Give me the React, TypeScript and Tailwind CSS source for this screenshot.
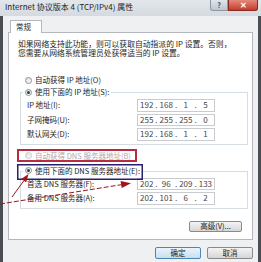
import { Fragment } from 'react';

const font = "font-['Noto_Sans_CJK_SC','Noto_Sans',sans-serif]";

function Radio({ checked = false, disabled = false }: { checked?: boolean; disabled?: boolean }) {
  return (
    <span
      className={
        'flex h-[7px] w-[7px] shrink-0 items-center justify-center rounded-full border bg-gradient-to-br from-[#dcdcdc] to-white ' +
        (disabled ? 'border-[#c9c9c9]' : 'border-[#8c9096]')
      }
    >
      {checked && <span className="h-[3px] w-[3px] rounded-full bg-[#24404f]" />}
    </span>
  );
}

function RadioRow({ label, checked, disabled }: { label: string; checked?: boolean; disabled?: boolean }) {
  return (
    <div className={'flex h-[10px] items-center gap-[3px] text-[7.5px] ' + (disabled ? 'text-[#ababab]' : 'text-[#1c1c1c]')}>
      <Radio checked={checked} disabled={disabled} />
      <span>{label}</span>
    </div>
  );
}

function IpBox({ parts }: { parts: string[] }) {
  return (
    <div className="flex h-[12.5px] w-[78px] items-center border border-[#c8cbd0] bg-white text-[#444]">
      {parts.map((p, i) => (
        <Fragment key={i}>
          <span className="flex-1 text-center">{p}</span>
          {i < 3 && <span>.</span>}
        </Fragment>
      ))}
    </div>
  );
}

function FieldRow({ label, parts }: { label: string; parts: string[] }) {
  return (
    <div className="flex h-[12.5px] items-center">
      <span className="w-[110px] shrink-0 text-[7.5px]">{label}</span>
      <IpBox parts={parts} />
    </div>
  );
}

function GroupBox({ title, rows }: { title: string; rows: { label: string; parts: string[] }[] }) {
  return (
    <div className="ml-[11px] mr-[4px] border border-[#d5dde3] pb-[3px] pl-[6px]">
      <div className="-mt-[6px] -ml-[4px] flex">
        <div className="bg-white px-[2px]">
          <RadioRow label={title} checked />
        </div>
      </div>
      <div className="mt-[2px] flex flex-col gap-[2px]">
        {rows.map((r) => (
          <FieldRow key={r.label} label={r.label} parts={r.parts} />
        ))}
      </div>
    </div>
  );
}

function Button({ label, primary = false, className = '' }: { label: string; primary?: boolean; className?: string }) {
  return (
    <div
      className={
        'flex items-center justify-center rounded-[2px] border bg-gradient-to-b text-[7.5px] ' +
        (primary
          ? 'border-[#4b86b4] from-[#eaf4fb] to-[#c9dfee] '
          : 'border-[#8a8a8a] from-[#f4f4f4] to-[#d6d6d6] ') +
        className
      }
    >
      {label}
    </div>
  );
}

export default function App() {
  return (
    <div className={'relative h-[262px] w-[261px] overflow-hidden bg-[#e9ebee] text-[8px] leading-[8px] text-[#1c1c1c] ' + font}>
      {/* Title bar */}
      <div className="flex h-[16px] items-start bg-gradient-to-b from-[#e3e7eb] to-[#d4dae0]">
        <span className="ml-[5px] mt-[3px] text-[#222]">Internet 协议版本 4 (TCP/IPv4) 属性</span>
        <div className="ml-auto flex">
          <div className="flex h-[11px] w-[18px] items-center justify-center rounded-bl-[3px] border border-t-0 border-[#8d98a5] bg-gradient-to-b from-[#dfe5ec] to-[#bcc6d1] text-[7px] font-bold text-[#3a4451]">
            ?
          </div>
          <div className="mr-[3px] flex h-[11px] w-[30px] items-center justify-center rounded-br-[3px] border border-t-0 border-[#8a2a20] bg-gradient-to-b from-[#e2887a] to-[#c5372a] text-[8px] font-bold text-white">
            ✕
          </div>
        </div>
      </div>

      <div className="flex h-[246px]">
        <div className="w-[3px] bg-[#4a4d52]" />
        <div className="flex w-[255px] flex-col bg-[#eef0f2] pt-[4px]">
          {/* Tab */}
          <div className="ml-[7px] flex">
            <div className="relative z-10 -mb-px flex h-[13px] w-[32px] items-center border border-b-0 border-[#b4b8be] bg-white pl-[5px] text-[7.5px]">
              常规
            </div>
          </div>

          {/* Tab panel */}
          <div className="mx-[5px] flex h-[208px] flex-col border border-[#b4b8be] bg-white">
            <div className="mt-[6px] pl-[9px] text-[7.8px] leading-[9px]">
              <div>如果网络支持此功能，则可以获取自动指派的 IP 设置。否则，</div>
              <div>您需要从网络系统管理员处获得适当的 IP 设置。</div>
            </div>

            <div className="mt-[18px] pl-[16px]">
              <RadioRow label="自动获得 IP 地址(O)" />
            </div>

            <div className="mt-[7px]">
              <GroupBox
                title="使用下面的 IP 地址(S):"
                rows={[
                  { label: 'IP 地址(I):', parts: ['192', '168', '1', '5'] },
                  { label: '子网掩码(U):', parts: ['255', '255', '255', '0'] },
                  { label: '默认网关(D):', parts: ['192', '168', '1', '1'] },
                ]}
              />
            </div>

            <div className="mt-[6px] pl-[16px]">
              <RadioRow label="自动获得 DNS 服务器地址(B)" disabled />
            </div>

            <div className="mt-[10px]">
              <GroupBox
                title="使用下面的 DNS 服务器地址(E):"
                rows={[
                  { label: '首选 DNS 服务器(F):', parts: ['202', '96', '209', '133'] },
                  { label: '备用 DNS 服务器(A):', parts: ['202', '101', '6', '2'] },
                ]}
              />
            </div>

            <div className="mr-[10px] mt-[12px] flex justify-end">
              <Button label="高级(V)..." className="h-[11px] w-[53px]" />
            </div>
          </div>

          {/* Dialog buttons */}
          <div className="mr-[5px] mt-[7px] flex justify-end gap-[6px]">
            <Button label="确定" primary className="h-[12px] w-[46px]" />
            <Button label="取消" className="h-[12px] w-[46px]" />
          </div>
        </div>
        <div className="w-[3px] bg-[#4a4d52]" />
      </div>

      {/* Hand-drawn annotations */}
      <svg className="pointer-events-none absolute left-0 top-0" width="261" height="262" viewBox="0 0 261 262">
        <rect x="18" y="150" width="118" height="11" fill="none" stroke="#b92c40" strokeWidth="2" />
        <rect x="17.75" y="164.75" width="124.5" height="14.5" fill="none" stroke="#2a1f6c" strokeWidth="1.5" />
        <line x1="0" y1="204" x2="122" y2="184.6" stroke="#8e1a22" strokeWidth="1" strokeDasharray="5 2" />
        <polygon points="131,183.2 121.7,188 120.6,181.1" fill="#a0121e" />
        <line x1="12" y1="197" x2="24" y2="180.5" stroke="#8e1a22" strokeWidth="1" />
        <polygon points="28.5,174 26.2,182.3 21.2,179.1" fill="#a0121e" />
      </svg>
    </div>
  );
}
